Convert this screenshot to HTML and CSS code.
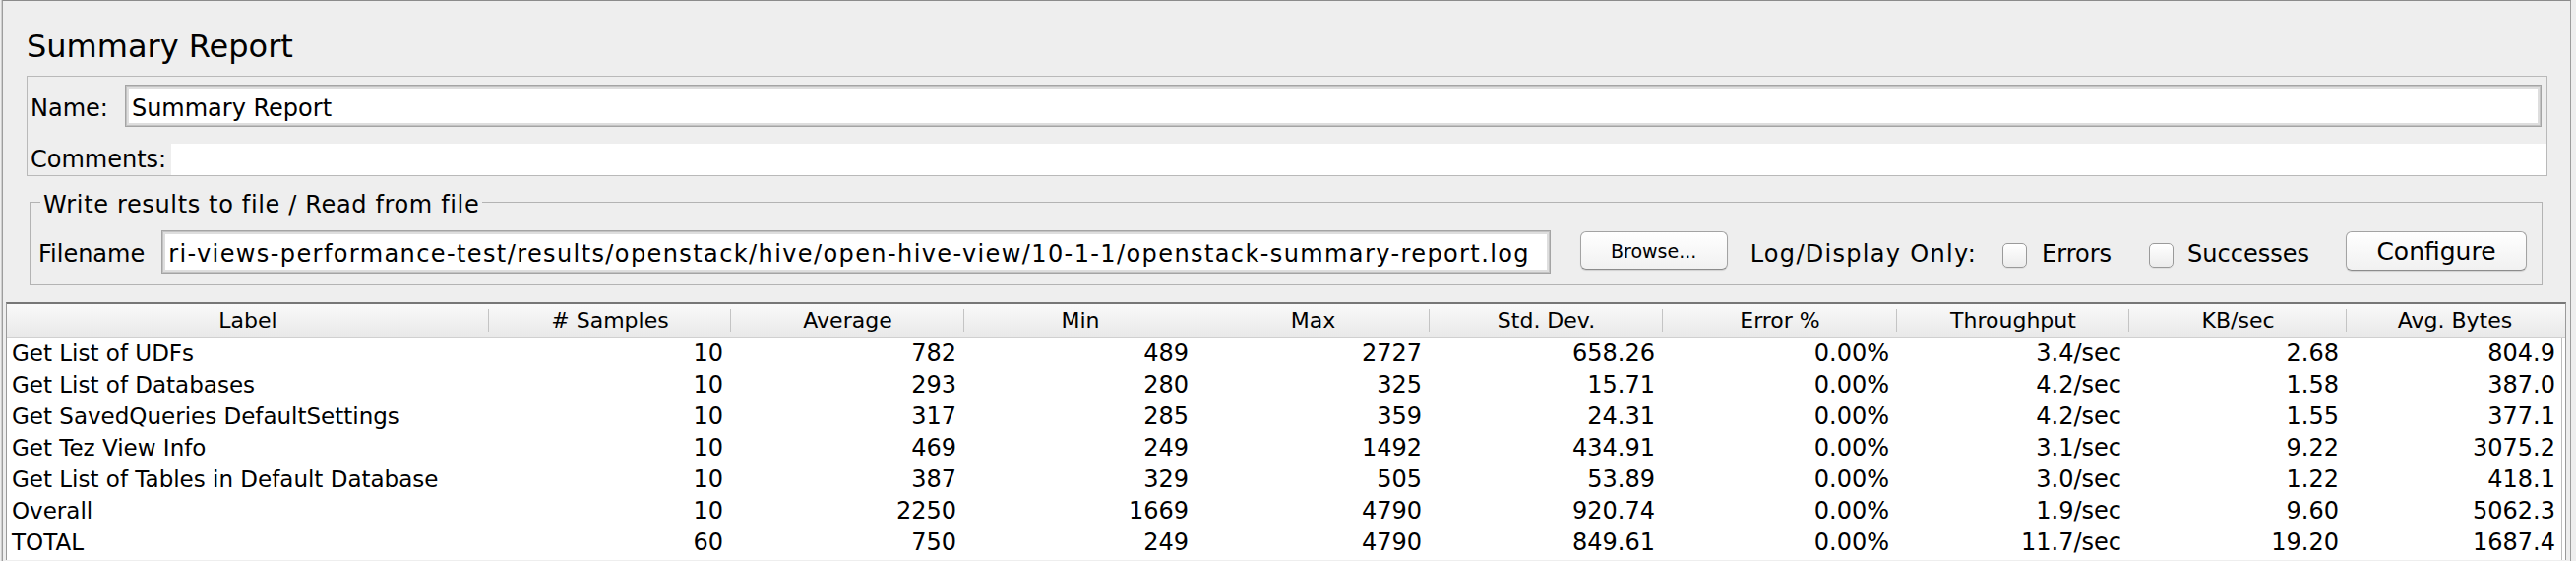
FILE: index.html
```html
<!DOCTYPE html>
<html lang="en">
<head>
<meta charset="utf-8">
<title>Summary Report</title>
<link rel="stylesheet" href="styles.css">
</head>
<body>
<div class="frame">
  <h1 class="title">Summary Report</h1>

  <div class="name-panel">
    <div class="name-row">
      <span class="lbl name-lbl">Name:</span>
      <div class="field name-field">Summary Report</div>
    </div>
    <div class="comments-row">
      <span class="lbl">Comments:</span>
      <div class="comments-area"></div>
    </div>
  </div>

  <fieldset class="file-panel">
    <legend class="file-legend">Write results to file / Read from file</legend>
    <div class="file-row">
      <span class="lbl row-lbl">Filename</span>
      <div class="field file-field">ri-views-performance-test/results/openstack/hive/open-hive-view/10-1-1/openstack-summary-report.log</div>
      <button class="btn btn-browse" type="button">Browse...</button>
      <span class="lbl row-lbl log-lbl">Log/Display Only:</span>
      <label class="check check-errors"><span class="box"></span><span class="row-lbl">Errors</span></label>
      <label class="check check-success"><span class="box"></span><span class="row-lbl">Successes</span></label>
      <button class="btn btn-configure" type="button">Configure</button>
    </div>
  </fieldset>

  <div class="table">
    <div class="tr thead">
      <div class="th">Label</div>
      <div class="th"># Samples</div>
      <div class="th">Average</div>
      <div class="th">Min</div>
      <div class="th">Max</div>
      <div class="th">Std. Dev.</div>
      <div class="th">Error %</div>
      <div class="th">Throughput</div>
      <div class="th">KB/sec</div>
      <div class="th">Avg. Bytes</div>
    </div>
    <div class="tr">
      <div class="td lab">Get List of UDFs</div>
      <div class="td">10</div><div class="td">782</div><div class="td">489</div><div class="td">2727</div>
      <div class="td">658.26</div><div class="td">0.00%</div><div class="td">3.4/sec</div><div class="td">2.68</div><div class="td">804.9</div>
    </div>
    <div class="tr">
      <div class="td lab">Get List of Databases</div>
      <div class="td">10</div><div class="td">293</div><div class="td">280</div><div class="td">325</div>
      <div class="td">15.71</div><div class="td">0.00%</div><div class="td">4.2/sec</div><div class="td">1.58</div><div class="td">387.0</div>
    </div>
    <div class="tr">
      <div class="td lab">Get SavedQueries DefaultSettings</div>
      <div class="td">10</div><div class="td">317</div><div class="td">285</div><div class="td">359</div>
      <div class="td">24.31</div><div class="td">0.00%</div><div class="td">4.2/sec</div><div class="td">1.55</div><div class="td">377.1</div>
    </div>
    <div class="tr">
      <div class="td lab">Get Tez View Info</div>
      <div class="td">10</div><div class="td">469</div><div class="td">249</div><div class="td">1492</div>
      <div class="td">434.91</div><div class="td">0.00%</div><div class="td">3.1/sec</div><div class="td">9.22</div><div class="td">3075.2</div>
    </div>
    <div class="tr">
      <div class="td lab">Get List of Tables in Default Database</div>
      <div class="td">10</div><div class="td">387</div><div class="td">329</div><div class="td">505</div>
      <div class="td">53.89</div><div class="td">0.00%</div><div class="td">3.0/sec</div><div class="td">1.22</div><div class="td">418.1</div>
    </div>
    <div class="tr">
      <div class="td lab">Overall</div>
      <div class="td">10</div><div class="td">2250</div><div class="td">1669</div><div class="td">4790</div>
      <div class="td">920.74</div><div class="td">0.00%</div><div class="td">1.9/sec</div><div class="td">9.60</div><div class="td">5062.3</div>
    </div>
    <div class="tr">
      <div class="td lab">TOTAL</div>
      <div class="td">60</div><div class="td">750</div><div class="td">249</div><div class="td">4790</div>
      <div class="td">849.61</div><div class="td">0.00%</div><div class="td">11.7/sec</div><div class="td">19.20</div><div class="td">1687.4</div>
    </div>
  </div>
</div>
</body>
</html>
```

FILE: styles.css
```css
* { box-sizing: border-box; }

html, body {
  margin: 0;
  height: 570px;
  overflow: hidden;
}

body {
  background: #eeeeee;
  font-family: "DejaVu Sans", "Liberation Sans", sans-serif;
  font-size: 24px;
  color: #000;
}

.frame {
  margin-left: 2px;
  width: 2611px;
  height: 570px;
  border-top: 1px solid #8b8b8b;
  border-left: 1px solid #9d9d9d;
  border-right: 1px solid #9d9d9d;
  box-shadow: -1px 0 0 #cfcfcf;
}

.title {
  margin: 26px 0 0 24px;
  height: 40px;
  font-size: 32px;
  font-weight: normal;
  line-height: 40px;
}

.lbl {
  line-height: 32px;
  white-space: nowrap;
}

/* Name / Comments panel */
.name-panel {
  margin: 10px 0 0 24px;
  width: 2562px;
  height: 102px;
  border: 1px solid #b9b9b9;
  padding: 8px 0 0 3px;
}

.name-row {
  display: flex;
  align-items: center;
  height: 43px;
}

.name-lbl { padding-top: 4px; }

.field {
  background: #fff;
  border: 1px solid #a4a4a4;
  box-shadow: inset 0 0 0 1px #c2c2c2, inset 0 0 0 3px #dedede;
  line-height: 32px;
  white-space: nowrap;
  overflow: hidden;
}

.name-field {
  flex: 1;
  height: 43px;
  margin: 0 5px 0 17px;
  padding: 7px 6px 0 6px;
}

.comments-row {
  display: flex;
  height: 32px;
  margin-top: 17px;
}

.comments-area {
  flex: 1;
  margin-left: 5px;
  background: #fff;
}

/* Write results panel */
.file-panel {
  margin: 11px 0 0 27px;
  width: 2554px;
  min-width: 0;
  border: 1px solid #b3b3b3;
  padding: 0 15px 11px 8px;
}

.file-legend {
  margin-left: 2px;
  padding: 5px 3px 0;
  font-size: 24px;
  line-height: 26px;
  letter-spacing: 0.65px;
}

.file-row {
  display: flex;
  align-items: center;
  height: 44px;
  margin-top: 13px;
}

.row-lbl {
  line-height: 32px;
  padding-top: 4px;
  white-space: nowrap;
}

.file-field {
  flex: 1;
  height: 44px;
  margin-left: 17px;
  padding: 7px 6px 0 6px;
  letter-spacing: 1.4px;
}

.btn {
  font-family: inherit;
  color: #000;
  padding: 0;
  background: linear-gradient(#ffffff, #f1f1f1);
  border: 1px solid #a3a3a3;
  border-bottom-color: #8c8c8c;
  border-radius: 6px;
  box-shadow: 0 1px 1px rgba(0, 0, 0, 0.12);
}

.btn-browse {
  width: 150px;
  height: 39px;
  margin: 0 0 3px 30px;
  font-size: 19px;
}

.log-lbl {
  margin-left: 23px;
  letter-spacing: 1.3px;
}

.check {
  display: flex;
  align-items: center;
}

.check-errors { margin-left: 26px; }
.check-success { margin-left: 38px; }

.box {
  width: 25px;
  height: 25px;
  margin: 7px 15px 0 0;
  border: 1px solid #9a9a9a;
  border-radius: 5px;
  background: linear-gradient(#ffffff, #ececec);
  box-shadow: 0 1px 0 rgba(0, 0, 0, 0.06);
}

.check-success .box { margin-right: 14px; }

.btn-configure {
  width: 184px;
  height: 40px;
  margin: 0 0 2px 37px;
  font-size: 25px;
}

/* Table */
.table {
  margin: 17px 0 0 3px;
  width: 2602px;
  height: 262px;
  background: #fff;
  border-top: 2px solid #777;
  border-left: 1px solid #9a9a9a;
  border-right: 1px solid #9a9a9a;
  box-shadow: inset -3px 0 0 #fff, inset -4px 0 0 #bdbdbd;
}

.tr {
  display: grid;
  grid-template-columns: 490px 246px 237px 236px 237px 237px 238px 236px 221px 220px;
  height: 32px;
}

.thead {
  height: 34px;
  background: linear-gradient(#f9f9f9, #e9e9e9);
  border-bottom: 1px solid #d0d0d0;
}

.th {
  position: relative;
  font-size: 22px;
  line-height: 33px;
  text-align: center;
  white-space: nowrap;
}

.th::after {
  content: "";
  position: absolute;
  right: 0;
  top: 5px;
  bottom: 5px;
  width: 1px;
  background: #c4c4c4;
}

.th:last-child::after { display: none; }

.td {
  font-size: 24px;
  line-height: 32px;
  text-align: right;
  padding: 0 8px 0 0;
  white-space: nowrap;
  overflow: hidden;
}

.td.lab {
  text-align: left;
  padding: 0 0 0 5px;
  font-size: 23px;
}
```
